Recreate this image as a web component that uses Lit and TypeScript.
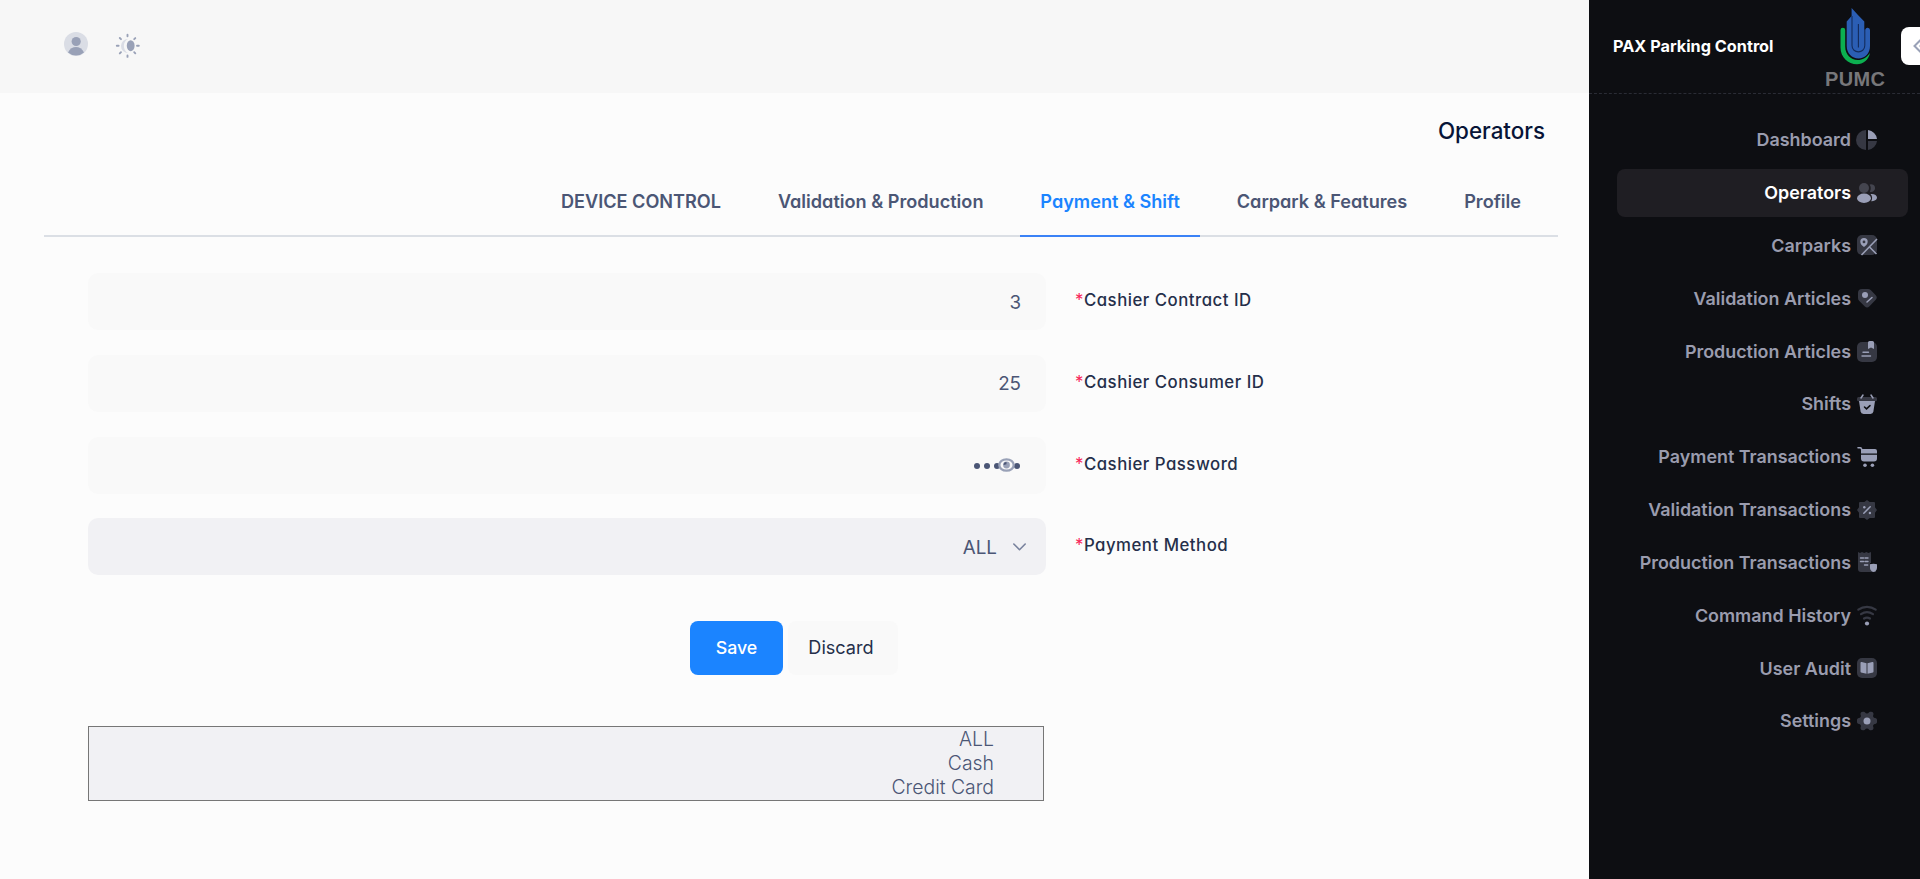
import { LitElement, html, svg, css } from "lit";
import { customElement, state } from "lit/decorators.js";

const L = "#9a9fb7";
const D = "#363843";

const icons: Record<string, any> = {
  Dashboard: svg`<path d="M9 0v20A10 10 0 0 1 9 0z" fill=${D}/><path d="M11 11h9a10 10 0 0 1-9 9z" fill=${D}/><path d="M11 0a10 10 0 0 1 9 9h-9z" fill=${L}/>`,
  Operators: svg`<circle cx="7" cy="5" r="5" fill="#44454f"/><path d="M12.6 1.6a3.9 3.9 0 1 1 .2 7.2 7 7 0 0 0-.2-7.200z" fill="#44454f"/><ellipse cx="7" cy="15.300" rx="7" ry="4.700" fill=${L}/><path d="M13.500 11c4-.4 6.500 1.400 6.500 3.600s-2.300 3.900-5.800 3.600c1.300-2.400 1.400-4.700-.7-7.200z" fill=${L}/>`,
  Carparks: svg`<rect width="20" height="20" rx="5" fill=${D}/><path d="M4.500 20 20 4M12.500 12l7 7" stroke=${L} stroke-width="1.600" fill="none"/><path d="M7 3a3.700 3.700 0 0 0-3.700 3.700C3.300 9 5.500 11 7 12c1.500-1 3.700-3 3.700-5.300A3.700 3.700 0 0 0 7 3zm0 2.500a1.400 1.400 0 1 1 0 2.800 1.400 1.400 0 0 1 0-2.800z" fill=${L}/>`,
  "Validation Articles": svg`<path d="M1 5a4 4 0 0 1 4-4h6c1 0 2 .4 2.700 1.100l4.800 4.900a3.400 3.400 0 0 1 0 4.900l-6 6.300a3.400 3.400 0 0 1-4.900 0L2.300 13A4 4 0 0 1 1 10z" fill=${D}/><circle cx="8" cy="7" r="3" fill=${L}/><path d="m10 14 5-4.500" stroke=${L} stroke-width="1.500" stroke-linecap="round"/>`,
  "Production Articles": svg`<rect y="1" width="20" height="20" rx="5" fill=${D}/><path d="M11 1.500A1.500 1.500 0 0 1 12.500 0h3A1.500 1.500 0 0 1 17 1.500V8l-3-1.500L11 8z" fill=${L}/><path d="M6 11.300h5.500M5 15h8.500" stroke=${L} stroke-width="1.400" stroke-linecap="round"/>`,
  Shifts: svg`<rect y="3" width="20" height="4.200" rx="1.500" fill=${D}/><path d="M6 1 4 4M14 1l2 3" stroke=${L} stroke-width="1.500" stroke-linecap="round"/><path d="M2 7h16l-1.600 10.500A3 3 0 0 1 13.500 20h-7a3 3 0 0 1-2.900-2.500z" fill=${L}/><path d="m7.500 13 2 1.900 3.500-3.300" stroke="#0d0e12" stroke-width="1.500" stroke-linecap="round" fill="none"/>`,
  "Payment Transactions": svg`<path d="M1 .8h2.200c.6 0 1 .3 1.200.8L5 3" stroke=${L} stroke-width="1.600" stroke-linecap="round" fill="none"/><path d="M4 2h14a2 2 0 0 1 2 2v2.500H4zM4 7.700h16v3.800a3 3 0 0 1-3 3H7a3 3 0 0 1-3-3z" fill=${L}/><circle cx="8" cy="18.300" r="1.800" fill=${L}/><circle cx="15.400" cy="18.300" r="1.800" fill=${L}/>`,
  "Validation Transactions": svg`<path d="M10 0l2.700 2h4.300a1 1 0 0 1 1 1v4.300L20 10l-2 2.700V17a1 1 0 0 1-1 1h-4.300L10 20l-2.700-2H3a1 1 0 0 1-1-1v-4.300L0 10l2-2.700V3a1 1 0 0 1 1-1h4.300z" fill=${D}/><path d="m6.800 13.200 6.400-6.400" stroke=${L} stroke-width="1.500" stroke-linecap="round"/><circle cx="7.300" cy="7.200" r="1.200" fill=${L}/><circle cx="12.900" cy="13" r="1.200" fill=${L}/>`,
  "Production Transactions": svg`<path d="M1 0l2 1 2-1 2.200 1 2.200-1 2 1L14 0v11h-1v9H4a3 3 0 0 1-3-3z" fill=${D}/><path d="M12 20v-8h7v8z" fill=${D}/><path d="M3.500 6h3M8 6h3M3.500 9.500h3M8 9.500h3M7.500 13h3.200" stroke=${L} stroke-width="1.400" stroke-linecap="round"/><path d="M13 12.300q3.500-1.300 7 0V16q-.3 3-3.500 4-3.200-1-3.500-4z" fill=${L}/>`,
  "Command History": svg`<path d="M1.300 4.700a15 15 0 0 1 17.400 0M4 9.100a10.500 10.500 0 0 1 12 0M7 13.500a5.500 5.500 0 0 1 6 0" stroke=${D} stroke-width="2.200" stroke-linecap="round" fill="none"/><circle cx="10" cy="18.500" r="2.100" fill=${L}/>`,
  "User Audit": svg`<rect width="20" height="20" rx="5" fill=${D}/><path d="M3.500 5a1 1 0 0 1 1.300-1L9.500 5.200v10.600L4 14.400a.8.8 0 0 1-.5-.8zM16.500 5a1 1 0 0 0-1.300-1l-4.700 1.200v10.600l5.500-1.400a.8.8 0 0 0 .5-.8z" fill=${L}/>`,
  Settings: svg`<path d="M6.900.8c.6 0 .9.300 1.200.8.800 1.300 3 1.300 3.800 0 .3-.5.600-.8 1.200-.8h1.100c1.300 0 2.200.8 2.300 2 .1.500-.1 1-.3 1.500-.5 1.300.4 2.600 1.800 2.700 1.500.1 2 1 2 1.900v2.200c0 1-.6 1.800-2 1.900-1.400.1-2.300 1.400-1.800 2.700.2.500.4 1 .3 1.500-.1 1.200-1 2-2.300 2h-1.100c-.6 0-.9-.3-1.200-.8-.8-1.300-3-1.300-3.800 0-.3.500-.6.800-1.200.8H5.800c-1.300 0-2.200-.8-2.300-2-.1-.5.100-1 .3-1.500.5-1.300-.4-2.600-1.800-2.700-1.400-.1-2-.9-2-1.900V8.900C0 8 .6 7.100 2 7c1.400-.1 2.300-1.400 1.800-2.700-.2-.5-.4-1-.3-1.500.1-1.200 1-2 2.300-2z" fill=${D}/><circle cx="10" cy="10" r="3.500" fill=${L}/>`,
};

const tabs = ["Profile", "Carpark & Features", "Payment & Shift", "Validation & Production", "DEVICE CONTROL"];

@customElement("app-root")
export class AppRoot extends LitElement {
  @state() page = "Operators";
  @state() tab = "Payment & Shift";

  static styles = css`
    * { box-sizing: border-box; }
    :host { display: flex; height: 879px; width: 1920px; overflow: hidden; background: #fcfcfc; font-family: Inter, sans-serif; color: #252f4a; }
    svg { display: block; overflow: visible; flex: none; }
    .main { width: 1589px; height: 879px; }
    .topbar { height: 93px; background: #f7f7f7; display: flex; gap: 28px; padding: 32px 0 0 64px; align-items: flex-start; }
    .sun { margin-top: 2px; }
    .title { margin: 0; height: 74px; padding: 0 44px 0 0; text-align: right; font-size: 22.400px; font-weight: 500; line-height: 76px; color: #071437; }
    .tabs { display: flex; flex-direction: row-reverse; margin: 0 31px 0 44px; height: 70px; border-bottom: 2px solid #dbdfe5; padding-right: 17px; font-size: 18.120px; font-feature-settings: "cv11"; }
    .tab { height: 70px; padding: 0 20px; line-height: 68px; font-weight: 600; color: #4b5675; border-bottom: 2px solid transparent; white-space: nowrap; }
    .tab + .tab { margin-right: 16.900px; }
    .tab.on { color: #1b84ff; border-color: #3b82f6; }
    .form { padding: 36px 0 0 88px; display: grid; grid-template-columns: 958px 1fr; column-gap: 29px; row-gap: 24.800px; }
    .field { height: 57px; border-radius: 10px; background: #f9f9f9; color: #4b5675; padding: 1px 25px 0; display: flex; align-items: center; justify-content: flex-end; font-size: 18.800px; position: relative; }
    .select { background: #f1f1f4; padding-right: 20px; gap: 16px; }
    .label { line-height: 55px; font-size: 16.800px; font-weight: 500; letter-spacing: .5px; font-feature-settings: "cv11"; }
    .req { color: #f8285a; font-weight: 400; }
    .dots { display: flex; gap: 4px; margin-right: 1px; }
    .dot { width: 6px; height: 6px; border-radius: 50%; background: #4b5675; }
    .eye { position: absolute; right: 31px; top: 21px; }
    .actions { display: flex; gap: 5px; margin: 46px 0 0 690px; }
    .btn { border: 0; height: 54px; border-radius: 8px; font: 500 17.800px/52px Inter, sans-serif; text-align: center; padding: 0 0 1px; }
    .save { width: 93px; background: #1b84ff; color: #fff; }
    .discard { width: 110px; background: #f9f9f9; color: #252f4a; font-size: 18.100px; font-weight: 400; padding: 0 4px 2px 0; }
    .list { margin: 51px 0 0 88px; width: 956px; height: 75px; border: 1px solid #767676; background: #f1f1f4; color: #4b5675; font-size: 19.400px; font-weight: 300; line-height: 24px; text-align: right; padding-right: 49px; }
    .side { width: 331px; height: 879px; background: #0d0e12; }
    .brand { height: 94px; border-bottom: 1px dashed #2a2c35; display: flex; padding-left: 24px; position: relative; }
    .name { width: 211px; line-height: 93px; color: #fff; font-size: 16.250px; font-weight: 700; white-space: nowrap; }
    .logo { margin-top: 8px; }
    .pumc { font: 700 20px "Liberation Sans", sans-serif; letter-spacing: 1px; }
    .toggle { position: absolute; left: 312px; top: 27px; width: 38px; height: 38px; border-radius: 8px; background: #fff; padding: 11px; }
    .menu { padding: 21.700px 12px 0 28px; display: flex; flex-direction: column; gap: 4.850px; }
    .item { height: 48px; border-radius: 8px; display: flex; align-items: center; justify-content: flex-end; gap: 6px; padding-right: 31px; color: #9a9cae; font-size: 17.920px; font-weight: 600; white-space: nowrap; cursor: pointer; }
    .item.on { background: #1f1e23; color: #fff; }
  `;

  field(label: string, control: unknown, cls = "") {
    return html`<div class="field ${cls}">${control}</div><div class="label"><span class="req">*</span>${label}</div>`;
  }

  render() {
    return html`
      <main class="main">
        <header class="topbar">
          <svg width="24" height="24" viewBox="0 0 24 24"><circle cx="12" cy="12" r="12" fill="#dadde5"/><circle cx="12.200" cy="9.500" r="4.600" fill="#99a1b7"/><path d="M4 20.500c3.500-7.300 12.500-7.300 16 0a12 12 0 0 1-16 0z" fill="#99a1b7"/></svg>
          <svg class="sun" width="24" height="24" viewBox="0 0 24 24"><path d="M12 5a7 7 0 1 0 0 14 8 8 0 0 1 0-14z" fill="#dadde5"/><ellipse cx="14.700" cy="11.700" rx="3.900" ry="5.500" fill="#99a1b7"/><path d="M11.500.8v1.400M11.500 21.500v1.400M.8 11.700h1.800M21 11.700h1.800M3.800 4l1.200 1.200M18.200 5.200l1.100-1.100M3.800 19.400 5 18.200M18.200 18.200l1.100 1.100" stroke="#99a1b7" stroke-width="1.900" stroke-linecap="round"/></svg>
        </header>
        <h1 class="title">Operators</h1>
        <nav class="tabs">${tabs.map((t) => html`<div class="tab ${t === this.tab ? "on" : ""}" @click=${() => (this.tab = t)}>${t}</div>`)}</nav>
        <section class="form">
          ${this.field("Cashier Contract ID", "3")}
          ${this.field("Cashier Consumer ID", "25")}
          ${this.field("Cashier Password", html`<span class="dots">${[1, 2, 3, 4, 5].map(() => html`<i class="dot"></i>`)}</span>
            <svg class="eye" width="17" height="14" viewBox="0 0 17 14"><ellipse cx="8.500" cy="7" rx="7.200" ry="5.700" fill="#f9f9f9" stroke="#99a1b7" stroke-width="2.300"/><circle cx="8.500" cy="7" r="3.400" fill="#99a1b7"/><path d="M5.600 7A3 3 0 0 1 8.500 4v2.200z" fill="#4b5675"/></svg>`)}
          ${this.field("Payment Method", html`<span>ALL</span><svg width="13" height="8" viewBox="0 0 13 8"><path d="m.8 1 5.700 5.700L12.200 1" fill="none" stroke="#78829d" stroke-width="1.600" stroke-linecap="round" stroke-linejoin="round"/></svg>`, "select")}
        </section>
        <div class="actions"><button class="btn save">Save</button><button class="btn discard">Discard</button></div>
        <div class="list"><div>ALL</div><div>Cash</div><div>Credit Card</div></div>
      </main>
      <aside class="side">
        <div class="brand">
          <div class="name">PAX Parking Control</div>
          <svg class="logo" width="62" height="80" viewBox="0 0 62 80">
            <path d="M16.500 22a2.300 2.300 0 0 1 4.700 0v16.500c0 8 5.500 13.500 12.500 13.500 5 0 9-2.500 12.300-7-1.500 7-7 11.300-13 11.300-9 0-16.500-7-16.500-16.800z" fill="#0caf50"/>
            <path d="M22.700 13.500 27.600 8V0L33.500 6.500 40.300 13.500V22l1-.5a2.400 2.400 0 0 1 4.700.5v16c0 7.500-5 12.500-11.500 12.500S22.700 45.500 22.700 38z" fill="#2b5eb4"/>
            <path d="M28 8v29.500c0 8.500 12.800 8.500 12.800 0V21M34.400 16v23.500" fill="none" stroke="#132c5c" stroke-width="1.100"/>
            <text class="pumc" x="1" y="77.500" fill="#77777a" textLength="61">PUMC</text>
          </svg>
          <div class="toggle"><svg width="16" height="16" viewBox="0 0 16 16"><path d="M8.500 2 2.500 8l6 6M14.500 2l-6 6 6 6" fill="none" stroke="#99a1b7" stroke-width="2"/></svg></div>
        </div>
        <nav class="menu">${Object.keys(icons).map((n) => html`<div class="item ${n === this.page ? "on" : ""}" @click=${() => (this.page = n)}><span>${n}</span><svg width="20" height="20" viewBox="0 0 20 20">${icons[n]}</svg></div>`)}</nav>
      </aside>`;
  }
}
